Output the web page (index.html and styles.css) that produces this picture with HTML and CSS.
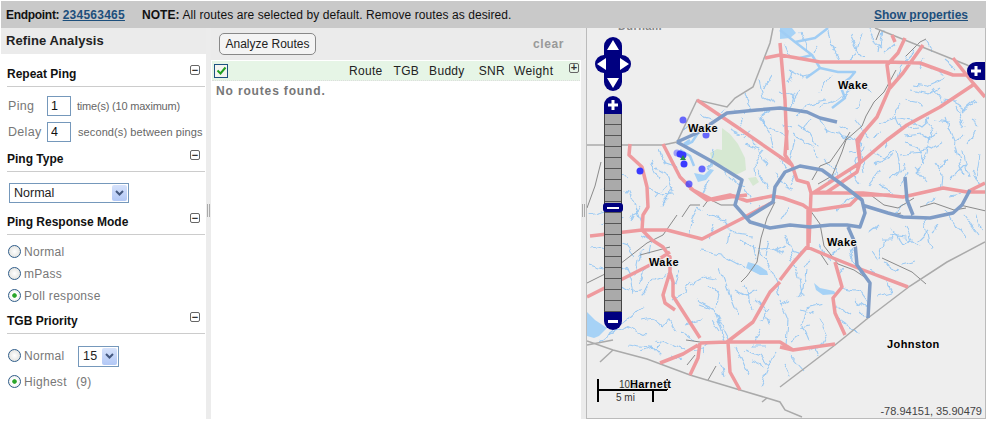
FILE: index.html
```html
<!DOCTYPE html>
<html lang="en">
<head>
    <meta charset="UTF-8">
    <title>Refine Analysis</title>
    <link rel="stylesheet" href="styles.css">
</head>
<body>
    <div class="topbar">
        <div><b class="ep-label">Endpoint:</b> <a href="#" class="endpoint">234563465</a><span class="note"><b>NOTE:</b> All routes are selected by default. Remove routes as desired.</span></div>
        <a href="#" class="props">Show properties</a>
    </div>
    <div class="content">
        <aside class="left">
            <h1>Refine Analysis</h1>

            <div class="sec-head first"><h2>Repeat Ping</h2><span class="tog">&minus;</span></div>
            <div class="ping-row">
                <span class="lbl">Ping</span><input class="num" value="1"><span class="hint narrow">time(s) (10 maximum)</span>
            </div>
            <div class="ping-row second">
                <span class="lbl">Delay</span><input class="num" value="4"><span class="hint roomy">second(s) between pings</span>
            </div>

            <div class="sec-head type"><h2>Ping Type</h2><span class="tog">&minus;</span></div>
            <div class="select wide"><span class="val">Normal</span><span class="arrow"><svg width="9" height="6" viewBox="0 0 9 6"><path d="M1 1l3.500 3.500L8 1" fill="none" stroke="#44587f" stroke-width="2"/></svg></span></div>

            <div class="sec-head mode"><h2>Ping Response Mode</h2><span class="tog">&minus;</span></div>
            <div class="radio"><i></i>Normal</div>
            <div class="radio"><i></i>mPass</div>
            <div class="radio"><i class="on"></i>Poll response</div>

            <div class="sec-head prio"><h2>TGB Priority</h2><span class="tog">&minus;</span></div>
            <div class="radio r-normal"><i></i><span class="rlabel">Normal</span>
                <div class="select small"><span class="val">15</span><span class="arrow"><svg width="9" height="6" viewBox="0 0 9 6"><path d="M1 1l3.500 3.500L8 1" fill="none" stroke="#44587f" stroke-width="2"/></svg></span></div>
            </div>
            <div class="radio r-high"><i class="on"></i><span class="rlabel">Highest</span><span>(9)</span></div>
        </aside>
        <div class="split"><span class="grip"></span></div>
        <main class="center">
            <div class="toolbar">
                <button class="analyze">Analyze Routes</button>
                <a href="#" class="clear">clear</a>
            </div>
            <div class="route-head">
                <span class="check"><svg width="11" height="9" viewBox="0 0 11 9"><path d="M1.500 4.500l3 3 5-6" fill="none" stroke="#22a022" stroke-width="2"/></svg></span>
                <span class="col c-route">Route</span>
                <span class="col c-tgb">TGB</span>
                <span class="col c-buddy">Buddy</span>
                <span class="col c-snr">SNR</span>
                <span class="col c-weight">Weight</span>
                <span class="tog plus">+</span>
            </div>
            <p class="empty">No routes found.</p>
        </main>
        <div class="split"><span class="grip"></span></div>
        <section class="map">
            <svg class="tiles" width="398" height="390" viewBox="587 28 398 390">
                <defs>
                    <filter id="wiggle" filterUnits="userSpaceOnUse" x="587" y="28" width="398" height="390">
                        <feTurbulence type="fractalNoise" baseFrequency="0.09" numOctaves="2" seed="4"/>
                        <feDisplacementMap in="SourceGraphic" scale="9" xChannelSelector="R" yChannelSelector="G"/>
                    </filter>
                </defs>
                <rect x="587" y="28" width="398" height="390" fill="#eeeeee"/>
                <!-- parks -->
                <path class="park" d="M722 128l8 6 8 10 7 14 1 12-8 4-5 1-8-8-5-2-8-4-2-8 7-4 5 1z"/>
                <path class="park" d="M748 178l8-1 3 5-6 4z"/>
                <!-- lakes -->
                <path class="lake" d="M780 28h12l4 5-6 5-10 1z"/>
                <path class="lake" d="M587 312l8 8 12 8-8 8-5 2-7-2z"/>
                <path class="lake" d="M814 283l6 5 14 3 2 3-13 1-7-5z"/>
                <path class="lake" d="M748 262l10 3 9 6 1 4-8 0-14-7z"/>
                <path class="lake" d="M694 173l10 2 6-6 4 1-8 10-8 2z"/>
                <path class="arm" d="M780 30l15 12 20-4 13-10M795 42l17 13 8 13 18 4 17 0-5 6-10 7 5 13-13 10M812 55l-12 3M820 68l-14 10M680 150l10 6 4 10M700 130l-8 12-8 4M690 140l-6 4"/>
                <!-- streams -->
                <g filter="url(#wiggle)">
                <path class="stream" d="M785 45l5 12M800 32l6 18M826 30l3 14 6 6M850 35l8 16 6 6M862 32l-6 22 -8 5M870 30l6 14 6 4M882 30l-4 22M895 45l-10 8M905 55l5 8M915 52l-15 16-4 14M925 58l-6 10M945 78l-18 8-14-2M910 90l20 4 10-6M933 88l8 12 16 1M950 100l15 10 12-8M925 106l-15-3-5-6M880 125l14-8 16 3 10 6 10-9M895 115l6 14 16-2M945 118l10 28 8 30M957 108l8 20M905 135l14-2 10 6 8-6M900 155l26-4 16-10M930 138l-3 16-10 18M897 150l3 20-10 8M870 90l-20-8-10 4M850 90l-12 10-18 6M825 100l-18 4-10 12M800 90l-6 10M790 70l12 6 8-2M825 130l12 4 14 2 10 8M798 125l12 8 8 14M795 135l8 6 12 6M848 152l12-3 4 22M825 160l14 16M835 165l-4 18M850 170l10 14M905 143l12 4 8 16M835 210l22-16M880 170l-12 16M760 118l10 14 4 18M770 128l14 6M795 140l-6 24M740 120l8 18 8 8M745 145l14 5 8 16M775 172l8 14 10 4M760 170l8 18M795 175l-6 10M810 145l8 12M840 135l12 4M700 195l8-16M715 150l-6 20M700 115l14 4 12-8M690 125l-8 8M650 190l14 6 10-2M660 205l10-10 4-8M656 168l14 8 4 16M667 184l-12 14M603 170l12 2 12 4M600 190l20-10M627 190l8 16 6 16M590 215l16-4 20 6M600 225l15-6M610 240l18 6 6 12M635 275l4-20 6-6M625 266l6 16 2 12M640 295l16-16 14-6M600 340l30-22 14-12M607 335l22-8 16 8M628 345l26 4 8 8M655 340l12 2 16 8M660 325l10-4 6 10M680 330l14 10M672 300l10-6 8-12M680 270l-6 14M700 250l20 4 26 14M720 268l10 28 8 20M745 285l8 26M760 252l14 22 6 20M725 340l-10-30-16-6M697 300l16 8 16 30M760 330l-8 16 14 0M735 345l14 30M745 350l16 6 8 10M775 352l-8 18-6 14M752 360l12 6M720 360l4 18M790 250l8 24 4 20M805 268l-2 20 -6 10M822 305l-16 4-4 16 6 14M780 300l8 20-2 24M820 318l8 16 -8 12M815 345l4 12M790 355l14 16M782 362l6 14M800 335l-10 8M850 250l10 26M870 270l14 8 8 14 -16 4M880 240l12 0 4-10M905 225l6 14 -8 6 -4-6M925 220l6 30M955 225l10 12M880 225l-10 8M840 288l20 4 10 14M838 318l20 14M855 300l14 10"/>
                <path class="stream" d="M820 245l10 16M810 260l-8 6M800 250l-4 8M845 268l-8 12M855 120l14 18M863 145l-8 20M875 165l18-10M880 185l14 10M905 165l-8 10M900 185l6-14M915 168l10 12M935 163l8 12 -2 16M925 205l10-6M950 195l10-2M962 150l6 26M971 170l8 14M980 155l-4 25M975 130l-8 14M965 215l14 20M930 230l-12 12M900 240l-8-14M940 225l-8 8M860 100l-4 8M830 75l-10 18M900 105l-12 14"/>
                <path class="stream" d="M705 215l18 6 12 12 20 2M715 225l-6 14M730 232l-2 12M740 240l14 10 16-2 12 6M700 208l-8 14-2 12M752 245l4 12M770 240l-4 16M785 236l6 14 12 4M790 205l-10 16M760 205l-8 12M745 190l6 12M725 170l12 14 8 2M765 150l-10 12 2 14M778 155l8 14M730 130l14 6M750 130l-6 10M770 108l-10 8 6 10M745 95l8 14M760 80l4 18 12 6M772 75l-8 14M745 115l-12-6M660 150l6 14 12 4M650 160l8 18M605 205l18 4M590 250l14-2 10 6M590 265l12 4 10-2M640 205l-8 16M640 235l10 6-2 14M612 260l14 10M618 285l10 6 12-2M645 270l-6 14M690 285l14-8 12 2M710 285l8 10 -2 10M700 320l-14 4M665 340l-8 8M640 320l14-2 10 8M690 352l14-2M672 355l10 4M650 348l-10 4M708 345l-6 10M712 320l8 12M735 290l12 6 10-6M775 250l10-4M755 300l10 10 4 14M770 310l-10 12M790 300l-10 6M800 310l14 4M840 248l-12 10M890 235l16 2 14 10M915 260l-14 4M900 270l-16-6M870 250l8 10M885 240l-6 18M825 345l-16 6M810 325l-10 2M850 315l-12-8M860 310l8 8M975 215l6 14M965 165l-14 14M950 160l-12 8M945 210l10 16M882 160l12-10M873 135l10-2M925 120l8 16M935 120l14 2M892 135l-8 12M870 150l14 8M905 205l-14 10M925 40l6 10M945 60l10 8M975 100l-14 12M970 120l10 6M930 68l14 6M965 135l-10 8M850 130l-12-4M820 120l6 12M810 118l-8 12M840 60l-8-12M818 44l-4 8M780 90l14 6 -4 12M782 125l10 4M792 70l-4 14"/>
                </g>
                <!-- rail and boundaries -->
                <path class="rail" d="M587 208l8-22 6-24M587 283l24-12 36-28 16-8 14-20M640 255l30-8M735 205l-14 0-12-6-6 8M700 205l-10 0-8 12M775 202l-8 16 -6 20-4 24-10 14-6 6M810 210l10 14 4 22 14 18 16 6 12 8M812 180l8-14 10-4 14-20 6-10M880 30l-4 10M906 56l14-14 6-3M896 70l-12 22-10 10-8 14-4 10-16 14-4 12-10 24-14 8M920 207l14-4 20 7 12-2M868 193l16 12 14 3 16-10M960 205l26 6M893 215l8-2M806 247l14 6 8 12M882 258l30 14 14 12M700 342l-14-2M716 366l-8 14M695 355l-8 10"/>
                <path class="border" d="M587 145h43l33 0 14-3 20-42 30 7 8-9 18-11 17-44 3-15M875 28l92 37 18 10M587 341l26 9 34 9 43 16 50 15 27 8 13 4 5 8 17 7M985 242l-38 20-37 24-42 32-23 19-10 8-55 42M767 398l-5 4M587 345l26-5M613 350l-13 12"/>
                <!-- roads -->
                <path class="road" d="M630 144l-1 11 13 12 5 20 1 20-5 8-1 15M590 236l52-6h25l35 9 41-21M642 230l10 10 11 7 7 10v15l3 10 0 14 27 42M670 272l-7 23 2 8 10 7M700 343l27-1 26-20 17-30 10-10M727 342l53 0 13 8 42-6M700 343l-2 15-8 17M698 345l-15 9-23 9M728 342l2 30 10 18M587 297l63-32 20-13M702 239l41-21 30-16M663 144l17 33 13 13 20 10 17-3 17-2M697 100l40 27 55 38 5 15 11 3 3 10-2 50M787 130l-2 25 7 10M690 188l17 12 23-5 17 6 25-5 11 2 20 7 7 5h7l33-5 10-10h30M812 193l15-1 30-20 3-10-2-19 7-13M765 58l15-3M780 43l5 57 2 50M780 55l40 7 67 0 33 1 33 12h20M892 35l3 7M905 38l-7 15-11 12 3 22-13 30-20 23 3 23M923 45l-20 28-13 15M953 58l20 25 12 14M973 85l-33 22-33 18-20 15-27 23-47 30M810 193h53l40 4 40-9 24 4 18 0M985 183l-18 9M807 247l26 11 30 12 45 17M808 210v37M807 247l-14 16-13 17M835 262l7 25-9 11 2 15 10 22M780 347l13 3 42-6"/>
                <!-- highways -->
                <path class="hwy" d="M677 142l20-9 30-20 30-3 23-2 27 4 13 6 17 4M677 142l36 20 29 18-7 25 15 17 20 6 20-3 20 2 20-2 17 0 13 2 5-14-3-13-22-17-18-13-22-4-15 6-10 15-2 15-26 16M848 227l7 16 2 22 13 18-2 35M905 177l2 23 6 15M862 205l26 8 15 4 27 1 23-5 9-8 8-15"/>
                <!-- pins -->
                <circle class="pin light" cx="683" cy="120" r="3.500"/>
                <circle class="pin light" cx="706" cy="135" r="3.500"/>
                <circle class="pin faint" cx="677" cy="153" r="3.500"/>
                <circle class="pin" cx="680" cy="154" r="3.500"/>
                <circle class="pin" cx="683" cy="155" r="3.500"/>
                <circle class="pin" cx="684" cy="164" r="3.500"/>
                <path d="M680 160l3-5 3 5z" fill="#2a8a4a"/>
                <circle class="pin light" cx="702" cy="169" r="3.500"/>
                <circle class="pin light" cx="689" cy="184" r="3.500"/>
                <circle class="pin" cx="640" cy="171" r="3.500"/>
                <!-- county labels -->
                <text class="county faded" x="618" y="30">Durham</text>
                <text class="county" x="688" y="132">Wake</text>
                <text class="county" x="838" y="89">Wake</text>
                <text class="county" x="827" y="246">Wake</text>
                <text class="county" x="649" y="266">Wake</text>
                <text class="county" x="887" y="348">Johnston</text>
                <!-- scale -->
                <path d="M598 379v23M598 390h69M667 379v11M653 390v12" stroke="#000" stroke-width="2" fill="none"/>
                <text class="scale" x="619" y="388">10 km</text>
                <text class="county" x="630" y="388">Harnett</text>
                <text class="scale" x="616" y="401">5 mi</text>
            </svg>

            <svg class="pan" width="36" height="54" viewBox="0 0 36 54">
                <rect x="9" y="0" width="18" height="54" rx="9" fill="#000080"/>
                <rect x="0" y="18" width="36" height="18" rx="9" fill="#000080"/>
                <path d="M18 3l6 10H12zM18 51l-6-10h12zM2 27l9-6v12zM34 27l-9-6v12z" fill="#fff"/>
            </svg>
            <div class="zoombar">
                <div class="zoom-end top"><svg width="12" height="12" viewBox="0 0 12 12"><path d="M1 6h10M6 1v10" stroke="#fff" stroke-width="3"/></svg></div>
                <div class="ladder"></div>
                <div class="thumb"></div>
                <div class="zoom-end bottom"><span class="dash"></span></div>
            </div>
            <div class="expand"><svg width="12" height="12" viewBox="0 0 12 12"><path d="M1 6h10M6 1v10" stroke="#fff" stroke-width="3"/></svg></div>
            <span class="coords">-78.94151, 35.90479</span>
        </section>
    </div>
</body>
</html>
```

FILE: styles.css
```css
html, body { margin: 0; padding: 0; background: #fff; }
body { font-family: "Liberation Sans", Arial, sans-serif; font-size: 12px; color: #222; width: 986px; height: 421px; padding: 1px 0 0 1px; box-sizing: border-box; overflow: hidden; }
a { color: #1d4f7c; }

.topbar { display: flex; justify-content: space-between; align-items: center; height: 27px; background: #c9c9c9; padding: 0 18px 0 5px; box-sizing: border-box; color: #111; }
.ep-label { letter-spacing: -.3px; }
.endpoint { font-weight: bold; font-size: 12px; letter-spacing: .25px; }
.note { margin-left: 17px; letter-spacing: .08px; }
.props { font-weight: bold; }

.content { display: flex; height: 391px; }

.left { width: 205px; flex: none; }
.left h1 { margin: 0; height: 26px; line-height: 26px; padding-left: 5px; background: #ebebeb; font-size: 13px; letter-spacing: .1px; color: #222; }
.sec-head { display: flex; justify-content: space-between; align-items: center; height: 24px; margin: 0 1px 0 6px; padding-right: 5px; border-bottom: 1px solid #ccc; box-sizing: content-box; }
.sec-head.first { margin-top: 8px; }
.sec-head.type { margin-top: 5px; }
.sec-head.mode { margin-top: 7px; }
.sec-head.prio { margin-top: 2px; }
.sec-head h2 { margin: 0; font-size: 12px; color: #111; }
.tog { display: block; width: 8px; height: 8px; border: 1px solid #666; border-radius: 2px; font: bold 11px/8px "Liberation Sans", sans-serif; text-align: center; color: #333; margin-top: -8px; box-sizing: content-box; }

.ping-row { display: flex; align-items: center; height: 20px; margin: 9px 0 0 7px; color: #777; }
.ping-row.second { margin-top: 6px; }
.lbl { width: 39px; font-size: 12.500px; letter-spacing: .3px; }
.num { width: 24px; height: 20px; box-sizing: border-box; border: 1px solid #7598bb; padding: 0 3px; margin: 0; font: 12.500px "Liberation Sans", sans-serif; color: #111; }
.hint { margin-left: 6px; font-size: 11px; color: #666; }
.hint.narrow { letter-spacing: -.2px; }
.hint.roomy { margin-left: 7px; letter-spacing: .1px; }

.select { display: flex; justify-content: space-between; align-items: center; box-sizing: border-box; border: 1px solid #7598bb; background: #fff; color: #222; font-size: 12.500px; padding: 1px 1px 1px 4px; }
.select.wide { width: 120px; height: 20px; margin: 11px 0 0 8px; }
.select.small { width: 41px; height: 21px; margin-left: 13px; }
.arrow { display: flex; align-items: center; justify-content: center; width: 15px; height: 100%; background: linear-gradient(#d6e2fb, #b2c8f6); border-radius: 2px; }

.radio { display: flex; align-items: center; height: 22px; margin-left: 7px; color: #777; letter-spacing: .3px; }
.sec-head.mode + .radio { margin-top: 6px; }
.radio i { width: 11px; height: 11px; margin-right: 3px; border: 1px solid #2f5d8a; border-radius: 50%; background: radial-gradient(#fff, #dcdcd6); box-sizing: content-box; flex: none; position: relative; top: -1px; }
.radio i.on { background: radial-gradient(#2aa52a 0, #2aa52a 24%, #fff 34%, #e6e6e0); }
.r-normal { margin-top: 11px; }
.r-high { margin-top: 4px; }
.rlabel { width: 41px; }
.r-high .rlabel { width: 52px; }

.split { width: 5px; flex: none; background: #ececec; display: flex; align-items: flex-start; justify-content: center; padding-top: 176px; box-sizing: border-box; }
.grip { width: 3px; height: 13px; border: solid #aaa; border-width: 0 1px; box-sizing: border-box; }

.center { width: 370px; flex: none; }
.toolbar { display: flex; justify-content: space-between; align-items: center; height: 32px; background: #ebebeb; padding: 0 17px 0 8px; }
.analyze { height: 22px; width: 97px; padding: 0; border: 1px solid #888; border-radius: 5px; background: #f4f4f4; font: 12px "Liberation Sans", sans-serif; color: #222; }
.clear { font-weight: bold; color: #999; text-decoration: none; letter-spacing: .6px; }
.route-head { display: flex; align-items: center; height: 19px; margin: 1px 1px 0 1px; padding-left: 2px; background: #e6f5e6; color: #222; position: relative; border-bottom: 1px dotted #ddd; letter-spacing: .3px; }
.check { display: flex; align-items: center; justify-content: center; width: 12px; height: 12px; border: 1px solid #1c5180; background: #f4f4f0; }
.col { white-space: nowrap; }
.c-route { margin-left: 121px; }
.c-tgb { margin-left: 11px; }
.c-buddy { margin-left: 10px; }
.c-snr { margin-left: 14px; }
.c-weight { margin-left: 9px; letter-spacing: .4px; }
.tog.plus { position: absolute; right: 1px; top: 2px; line-height: 7px; margin: 0; }
.empty { margin: 3px 0 0 5px; font-weight: bold; color: #777; letter-spacing: .85px; }

.map { position: relative; width: 400px; flex: none; height: 391px; border: solid #bbb; border-width: 0 1px 1px; box-sizing: border-box; overflow: hidden; }
.tiles { display: block; }
.park { fill: #d6e8d2; }
.lake { fill: #a6d2f6; }
.arm { fill: none; stroke: #a0cdf4; stroke-width: 2.500; stroke-linejoin: round; }
.stream { fill: none; stroke: #9ccaf3; stroke-width: 1.100; }
.rail { fill: none; stroke: #8a8a8a; stroke-width: 1; }
.border { fill: none; stroke: #aaa; stroke-width: 1.500; }
.road { fill: none; stroke: #ee9a9e; stroke-width: 3.500; stroke-linejoin: round; }
.hwy { fill: none; stroke: #7f9cc6; stroke-width: 3.500; stroke-linejoin: round; }
.pin { fill: #3a3aff; }
.pin.light { fill-opacity: .75; }
.pin.faint { fill-opacity: .45; }
.county { font: bold 11px "Liberation Sans", sans-serif; letter-spacing: .4px; fill: #000; stroke: #eee; stroke-width: 2px; paint-order: stroke; }
.county.faded { fill: #888; }
.scale { font: 10px "Liberation Sans", sans-serif; fill: #333; }

.pan { position: absolute; left: 8px; top: 9px; }
.zoombar { position: absolute; left: 17px; top: 68px; width: 18px; }
.zoom-end { display: flex; align-items: center; justify-content: center; height: 18px; background: #000080; }
.zoom-end.top { border-radius: 9px 9px 0 0; }
.zoom-end.bottom { border-radius: 0 0 9px 9px; }
.ladder { height: 198px; box-sizing: border-box; border: solid #444; border-width: 0 1px; background: repeating-linear-gradient(#aaa 0, #aaa 10px, #555 10px, #555 11px); }
.thumb { position: absolute; left: -1px; top: 107px; width: 20px; height: 9px; border-radius: 3px; background: #000080; display: flex; align-items: center; justify-content: center; }
.thumb::after { content: ""; width: 12px; height: 2px; background: #fff; }
.dash { width: 10px; height: 3px; background: #fff; }
.expand { position: absolute; right: 0; top: 34px; width: 18px; height: 18px; background: #000080; border-radius: 9px 0 0 9px; display: flex; align-items: center; justify-content: center; }
.coords { position: absolute; right: 3px; bottom: 1px; font-size: 11px; color: #444; }
```
